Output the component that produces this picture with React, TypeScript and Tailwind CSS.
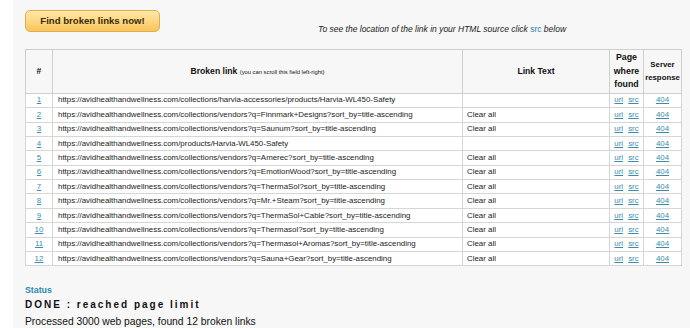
import React from "react";

const rows: [string, string][] = [
  ["https://avidhealthandwellness.com/collections/harvia-accessories/products/Harvia-WL450-Safety", ""],
  ["https://avidhealthandwellness.com/collections/vendors?q=Finnmark+Designs?sort_by=title-ascending", "Clear all"],
  ["https://avidhealthandwellness.com/collections/vendors?q=Saunum?sort_by=title-ascending", "Clear all"],
  ["https://avidhealthandwellness.com/products/Harvia-WL450-Safety", ""],
  ["https://avidhealthandwellness.com/collections/vendors?q=Amerec?sort_by=title-ascending", "Clear all"],
  ["https://avidhealthandwellness.com/collections/vendors?q=EmotionWood?sort_by=title-ascending", "Clear all"],
  ["https://avidhealthandwellness.com/collections/vendors?q=ThermaSol?sort_by=title-ascending", "Clear all"],
  ["https://avidhealthandwellness.com/collections/vendors?q=Mr.+Steam?sort_by=title-ascending", "Clear all"],
  ["https://avidhealthandwellness.com/collections/vendors?q=ThermaSol+Cable?sort_by=title-ascending", "Clear all"],
  ["https://avidhealthandwellness.com/collections/vendors?q=Thermasol?sort_by=title-ascending", "Clear all"],
  ["https://avidhealthandwellness.com/collections/vendors?q=Thermasol+Aromas?sort_by=title-ascending", "Clear all"],
  ["https://avidhealthandwellness.com/collections/vendors?q=Sauna+Gear?sort_by=title-ascending", "Clear all"],
];

export default function App() {
  return (
    <div
      className="flex w-[690px] h-[328px] overflow-hidden bg-white"
      style={{ fontFamily: '"Liberation Sans", Arial, sans-serif' }}
    >
      <div className="w-[13px] shrink-0 bg-white" />
      <div className="flex-1 bg-[#f7f7f7] pl-[12px] pt-[10px]">
        <div className="flex items-start">
          <button className="w-[135px] h-[22px] rounded-[5px] border border-[#e3ad4f] bg-gradient-to-b from-[#ffe8a6] to-[#f9c55a] text-[9.6px] font-bold text-[#3b2a05] flex items-center justify-center">
            Find broken links now!
          </button>
          <div className="ml-[158px] mt-[13px] text-[8.5px] italic text-[#222]">
            To see the location of the link in your HTML source click{" "}
            <span className="not-italic text-[#2f86a8]">src</span> below
          </div>
        </div>

        <table className="mt-[13px] w-[656px] table-fixed border-collapse border border-[#a9a9a9] text-[#222]">
          <colgroup>
            <col className="w-[27px]" />
            <col className="w-[410px]" />
            <col className="w-[147px]" />
            <col className="w-[34px]" />
            <col className="w-[38px]" />
          </colgroup>
          <thead>
            <tr className="h-[44px] bg-[#f7f7f7] font-bold text-[8.6px] text-[#111]">
              <th className="border border-[#cfcfcf] font-bold">#</th>
              <th className="border border-[#cfcfcf] font-bold">
                Broken link{" "}
                <span className="text-[5.8px] font-normal">(you can scroll this field left-right)</span>
              </th>
              <th className="border border-[#cfcfcf] font-bold">Link Text</th>
              <th className="border border-[#cfcfcf] font-bold leading-[13.5px] text-[8.8px]">
                Page
                <br />
                where
                <br />
                found
              </th>
              <th className="border border-[#cfcfcf] font-bold leading-[13.5px] text-[7.8px]">
                Server
                <br />
                response
              </th>
            </tr>
          </thead>
          <tbody>
            {rows.map(([url, text], i) => (
              <tr key={i} className="h-[14.4px] bg-white text-[7.9px] leading-[10px]">
                <td className="border border-[#d6d6d6] text-center">
                  <span className="underline text-[#3a8db0]">{i + 1}</span>
                </td>
                <td className="border border-[#d6d6d6] pl-[5px] whitespace-nowrap overflow-hidden">{url}</td>
                <td className="border border-[#d6d6d6] pl-[4px]">{text}</td>
                <td className="border border-[#d6d6d6] text-center whitespace-nowrap text-[#3a8db0]">
                  <span className="underline">url</span>
                  <span className="ml-[5px] underline">src</span>
                </td>
                <td className="border border-[#d6d6d6] text-center">
                  <span className="underline text-[#3a8db0]">404</span>
                </td>
              </tr>
            ))}
          </tbody>
        </table>

        <div className="mt-[19px] text-[8.8px] font-bold text-[#2a8ab0] leading-[11px]">Status</div>
        <div className="mt-[2px] text-[10px] font-bold tracking-[2px] text-[#111] leading-[13px]">
          DONE : reached page limit
        </div>
        <div className="mt-[4px] text-[10.3px] text-[#111] leading-[13px]">
          Processed 3000 web pages, found 12 broken links
        </div>
      </div>
    </div>
  );
}
